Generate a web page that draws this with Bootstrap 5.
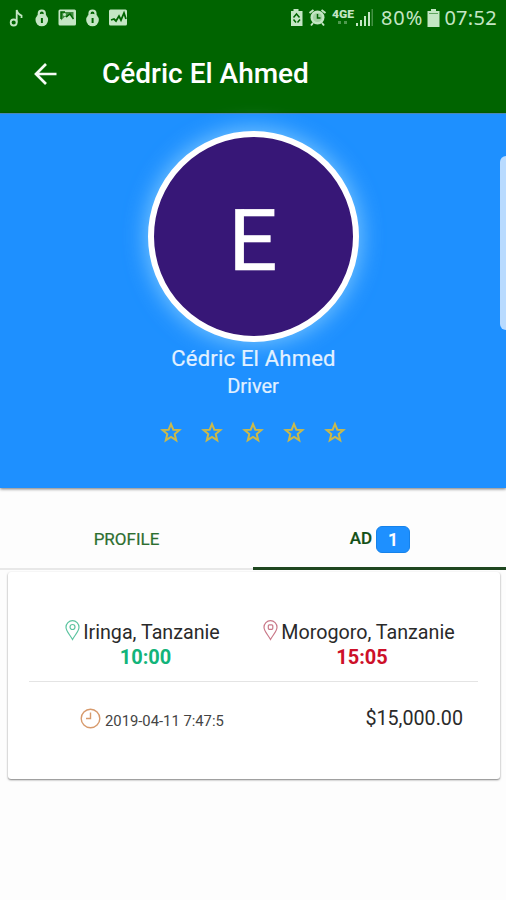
<!DOCTYPE html>
<html lang="en">
<head>
<meta charset="utf-8">
<meta name="viewport" content="width=device-width, initial-scale=1">
<title>Cédric El Ahmed</title>
<link href="https://cdn.jsdelivr.net/npm/bootstrap@5.3.0/dist/css/bootstrap.min.css" rel="stylesheet">
<style>
body{font-family:Roboto,"Liberation Sans",sans-serif;background:#fdfdfd;width:506px;height:900px;color:#2a2a2a}
svg{display:block;flex:none}
.app-top{background:#006400;height:113px}
.status-bar{height:36px;padding:0 9px;color:#c4e6c4;font:20px/36px "Noto Sans",sans-serif}
.status-pct{letter-spacing:1px;margin:0 4px 0 6px}
.status-time{letter-spacing:.3px;margin-left:4px}
.app-bar{height:75px;padding-left:33px}
.app-title{font-size:28px;line-height:32px;font-weight:500;margin-left:44px}
.hero{background:#1e90ff;height:375px;border-top:1px solid #4a86b4;padding-top:17px;box-shadow:0 1px 3px rgba(0,0,0,.55)}
.avatar{width:211px;height:211px;border:6px solid #fff;background:#371777;box-shadow:0 0 22px 2px rgba(150,215,255,.75);font:86px/1 Roboto,sans-serif;padding-top:8px;-webkit-text-stroke:.6px #fff}
.hero-name{font-size:22px;line-height:28px;margin-top:3px;color:#e2f1ff;letter-spacing:.2px;padding-left:1px;-webkit-text-stroke:.2px #e2f1ff}
.hero-role{font-size:20px;line-height:26px;color:#e2f1ff;-webkit-text-stroke:.2px #e2f1ff}
.stars{gap:19px;margin:22px 0 0 0}
.edge-handle{right:0;top:156px;width:6px;height:174px;background:#b9dbff;border-radius:6px 0 0 6px}
.tabs-row{height:82px;padding-top:23px;font-size:17px;color:#2c6e2f}
.tab-item{border-bottom:2px solid #e8e8e8;-webkit-text-stroke:.2px}
.tab-item.current{border-bottom:3px solid #1f4720;color:#125016;font-weight:500;padding-left:1px}
.count-pill{width:34px;height:27px;border-radius:6px;background:#1e90ff;border:1px solid #1682ea;color:#fff;font-size:18px;line-height:25px;margin-left:4px}
.trip-card{margin:2px 6px 0 8px;height:207px;border-radius:3px;background:#fff;box-shadow:0 1px 2px rgba(0,0,0,.5);padding:48px 22px 0 21px}
.depart-col{width:233px}
.arrive-col{width:200px}
.place{font-size:19.7px;line-height:26px}
.place-row{padding-right:6px;gap:3px}
.time{font-size:20px;line-height:22px;font-weight:700}
.dep{color:#12b47a}.arr{color:#cd1029}
.trip-line{height:1px;background:#e4e4e4;margin-top:13px}
.fare-row{padding:24px 15px 0 51px}
.stamp{font-size:14.8px;line-height:20px;color:#444;height:24px}
.stamp-text{padding-top:5px}
</style>
<script src="https://cdn.jsdelivr.net/npm/bootstrap@5.3.0/dist/js/bootstrap.bundle.min.js"></script>
</head>
<body class="position-relative overflow-hidden">
<header class="app-top">
  <div class="status-bar d-flex align-items-center justify-content-between">
    <svg width="120" height="22" viewBox="9 7 120 22" fill="#c4e6c4">
      <circle cx="13.7" cy="22.5" r="3" fill="none" stroke="#c4e6c4" stroke-width="1.8"/><path d="M16.700 22.500V10Q17.500 14 21.500 15.500V18" fill="none" stroke="#c4e6c4" stroke-width="1.800"/>
      <g id="lock"><path d="M38.800 17v-3.500a3 3 0 0 1 6 0V17" fill="none" stroke="#c4e6c4" stroke-width="2.200"/><circle cx="41.800" cy="20" r="6.300"/><path d="M40.900 18h2v5h-2z" fill="#006400"/></g>
      <use href="#lock" x="50.7"/>
      <rect x="58.500" y="9.500" width="17.500" height="16" rx="1.500"/><path d="M61 12h12.500v6l-3.500-4-3 3.500-2-1-4 4z" fill="#3f8c3f"/><path d="M61 19V12h4M66 17l4-3 3.500 5" fill="none" stroke="#006400" stroke-width="1.500"/><circle cx="64.500" cy="14.500" r="1.500"/>
      <rect x="109" y="9.500" width="18" height="16" rx="1.500"/><path d="M111 20l3-1 2 2 3-5 2 4 3-7 2 6" fill="none" stroke="#006400" stroke-width="1.800"/>
    </svg>
    <div class="d-flex align-items-center">
      <svg width="84" height="22" viewBox="291 7 84 22" fill="#c4e6c4">
        <path d="M293.500 9h5v2h4v15h-12V11h3z"/><path d="M293.500 17.500l3-3.500 3 3.500m-6 2l2.500 3m4-3l-2.500 3" fill="none" stroke="#006400" stroke-width="1.500"/>
        <circle cx="317.500" cy="17.500" r="7"/><path d="M309.500 13l4-3m8 0l4 3M313 23l-2 2.500m11-2.500l2 2.500" stroke="#c4e6c4" stroke-width="2"/><circle cx="317.500" cy="17.500" r="4.600" fill="#a4d2a4"/><path d="M317.500 14v4h3" fill="none" stroke="#006400" stroke-width="1.500"/>
        <text x="332" y="18" font-family="Roboto,sans-serif" font-size="11" font-weight="900" textLength="22" lengthAdjust="spacingAndGlyphs">4GE</text>
        <path d="M338 21h3v3h-3zM344 21h3v3h-3z" opacity=".4"/>
        <path d="M356 23h2v3h-2zM360 20h2v6h-2zM364 16h2v10h-2zM368 12h2v14h-2z"/><path d="M371.500 9h1.500v17h-1.500z" opacity=".35"/>
      </svg>
      <span class="status-pct">80%</span>
      <svg width="13" height="20" viewBox="0 0 13 20" fill="#c4e6c4"><path d="M4 1h5v2h3.500v16H.5V3H4z"/><path d="M2 5.500h9" stroke="#5fa55f"/></svg>
      <span class="status-time">07:52</span>
    </div>
  </div>
  <div class="app-bar d-flex align-items-center text-white">
    <svg width="25" height="24" viewBox="0 0 25 24" fill="none" stroke="#f4fbf4" stroke-width="2.700"><path d="M23.500 12H3M13 2L3 12l10 10"/></svg>
    <h1 class="app-title mb-0">Cédric El Ahmed</h1>
  </div>
</header>
<section class="hero d-flex flex-column align-items-center">
  <div class="avatar rounded-circle d-flex align-items-center justify-content-center text-white"><span>E</span></div>
  <div class="hero-name">Cédric El Ahmed</div>
  <div class="hero-role">Driver</div>
  <div class="stars d-flex">
    <svg width="22" height="22" viewBox="0 0 22 22"><path id="st" d="M11 3l2.300 5.700 6.100.4-4.700 4 1.500 6.100-5.200-3.300-5.200 3.300 1.500-6.100-4.700-4 6.100-.4z" fill="none" stroke="#c9b94c" stroke-width="2"/></svg>
    <svg width="22" height="22"><use href="#st"/></svg>
    <svg width="22" height="22"><use href="#st"/></svg>
    <svg width="22" height="22"><use href="#st"/></svg>
    <svg width="22" height="22"><use href="#st"/></svg>
  </div>
</section>
<div class="edge-handle position-absolute"></div>
<nav class="tabs-row d-flex">
  <div class="tab-item w-50 d-flex align-items-center justify-content-center">PROFILE</div>
  <div class="tab-item current w-50 d-flex align-items-center justify-content-center">AD<span class="count-pill text-center">1</span></div>
</nav>
<article class="trip-card">
  <div class="d-flex">
    <div class="depart-col text-center">
      <div class="place place-row d-flex justify-content-center"><svg width="15" height="21" viewBox="0 0 15 21" fill="none" stroke="#5cc4a0" stroke-width="1.200"><path d="M7.500 19.500C5 15 1 11 1 7.200a6.500 6.500 0 0 1 13 0C14 11 10 15 7.500 19.500z"/><circle cx="7.500" cy="7" r="2.500"/></svg>Iringa, Tanzanie</div>
      <div class="time dep">10:00</div>
    </div>
    <div class="arrive-col text-center">
      <div class="place place-row d-flex justify-content-center"><svg width="15" height="21" viewBox="0 0 15 21" fill="none" stroke="#c97888" stroke-width="1.200"><path d="M7.500 19.500C5 15 1 11 1 7.200a6.500 6.500 0 0 1 13 0C14 11 10 15 7.500 19.500z"/><rect x="5.300" y="4.800" width="4.500" height="4.500" rx="1"/></svg>Morogoro, Tanzanie</div>
      <div class="time arr">15:05</div>
    </div>
  </div>
  <div class="trip-line"></div>
  <div class="fare-row d-flex justify-content-between">
    <div class="stamp d-flex align-items-center"><svg class="me-1" width="21" height="21" viewBox="0 0 21 21" fill="none" stroke="#d79a6c" stroke-width="1.400"><circle cx="10.500" cy="10.500" r="9.300"/><path d="M10.500 4.500v6H6"/></svg><span class="stamp-text">2019-04-11 7:47:5</span></div>
    <div class="place">$15,000.00</div>
  </div>
</article>
</body>
</html>
